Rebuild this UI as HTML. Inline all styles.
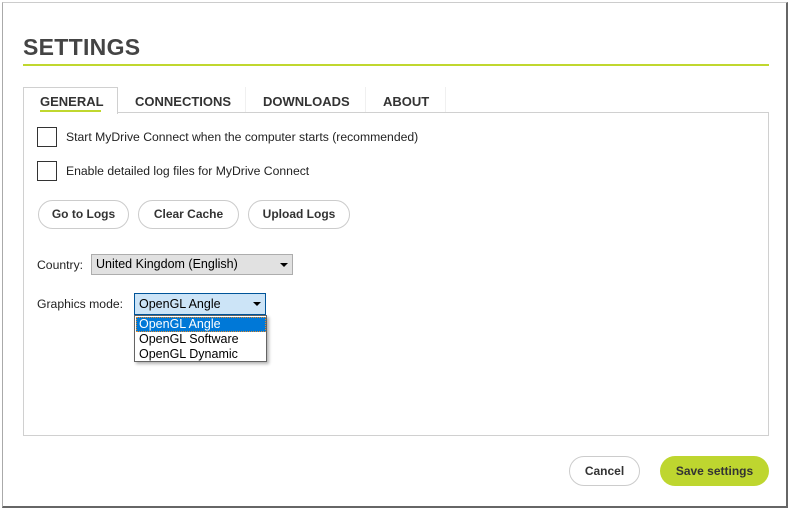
<!DOCTYPE html>
<html><head><meta charset="utf-8"><style>
*{box-sizing:border-box;margin:0;padding:0}
body{width:790px;height:510px;background:#fff;position:relative;overflow:hidden;font-family:"Liberation Sans",Arial,sans-serif;color:#333}
.a{position:absolute}
.frame{left:2px;top:2px;width:786px;height:506px;border:1px solid #aaa;border-right:2px solid #666;border-bottom:2px solid #666;border-top:1px solid #ccc}
.title{left:23px;top:34px;font-size:23px;font-weight:bold;color:#444;letter-spacing:0.3px}
.gl{left:23px;top:64px;width:746px;height:2px;background:#c0d72f}
.panel{left:23px;top:112px;width:746px;height:324px;border:1px solid #d0d0d0}
.tab{font-size:13px;font-weight:bold;color:#333;top:94px}
.tabbox{left:23px;top:87px;width:95px;height:27px;border:1px solid #d0d0d0;border-bottom:none;background:#fff}
.ul{left:40px;top:110px;width:61px;height:2px;background:#c0d72f}
.div{top:87px;width:1px;height:25px;background:#f0f0f0}
.cb{width:20px;height:20px;border:1px solid #333;left:37px}
.lbl{font-size:12.2px;color:#222}
.btn{top:200px;height:29px;border:1px solid #ccc;border-radius:15px;font-size:12px;font-weight:bold;color:#333;text-align:center;line-height:27px;background:#fff}
.sel{font-size:12.5px;color:#000;padding-left:4px;line-height:19px}
.arr{position:absolute;width:0;height:0;border-left:4px solid transparent;border-right:4px solid transparent;border-top:4px solid #000;top:8px}
.opt{left:1px;width:130px;height:15px;line-height:14px;padding-left:3px;font-size:12.5px}
</style></head><body>
<div class="a frame"></div>
<div class="a title">SETTINGS</div>
<div class="a gl"></div>
<div class="a panel"></div>
<div class="a tabbox"></div>
<div class="a tab" style="left:40px">GENERAL</div>
<div class="a ul"></div>
<div class="a tab" style="left:135px">CONNECTIONS</div>
<div class="a div" style="left:245px"></div>
<div class="a tab" style="left:263px">DOWNLOADS</div>
<div class="a div" style="left:365px"></div>
<div class="a tab" style="left:383px">ABOUT</div>
<div class="a div" style="left:445px"></div>

<div class="a cb" style="top:127px"></div>
<div class="a lbl" style="left:66px;top:130px">Start MyDrive Connect when the computer starts (recommended)</div>
<div class="a cb" style="top:161px"></div>
<div class="a lbl" style="left:66px;top:164px">Enable detailed log files for MyDrive Connect</div>

<div class="a btn" style="left:38px;width:91px">Go to Logs</div>
<div class="a btn" style="left:138px;width:101px">Clear Cache</div>
<div class="a btn" style="left:248px;width:102px">Upload Logs</div>

<div class="a lbl" style="left:37px;top:258px">Country:</div>
<div class="a sel" style="left:91px;top:254px;width:202px;height:21px;background:#e1e1e1;border:1px solid #adadad">United Kingdom (English)<span class="arr" style="left:188px"></span></div>

<div class="a lbl" style="left:37px;top:297px">Graphics mode:</div>
<div class="a sel" style="left:134px;top:293px;width:132px;height:22px;background:#cce4f7;border:1px solid #005499;line-height:20px">OpenGL Angle<span class="arr" style="left:118px"></span></div>
<div class="a" style="left:134px;top:315px;width:133px;height:47px;background:#fff;border:1px solid #646464;box-shadow:2px 2px 3px rgba(0,0,0,0.3)">
 <div class="a opt" style="top:1px;background:#0078d7;color:#fff;outline:1px dotted #e08a2b;outline-offset:-1px">OpenGL Angle</div>
 <div class="a opt" style="top:16px;color:#000">OpenGL Software</div>
 <div class="a opt" style="top:31px;color:#000">OpenGL Dynamic</div>
</div>

<div class="a btn" style="left:569px;top:456px;width:71px;height:30px;line-height:28px">Cancel</div>
<div class="a btn" style="left:660px;top:456px;width:109px;height:30px;line-height:30px;border:none;background:#bed62f">Save settings</div>
</body></html>
